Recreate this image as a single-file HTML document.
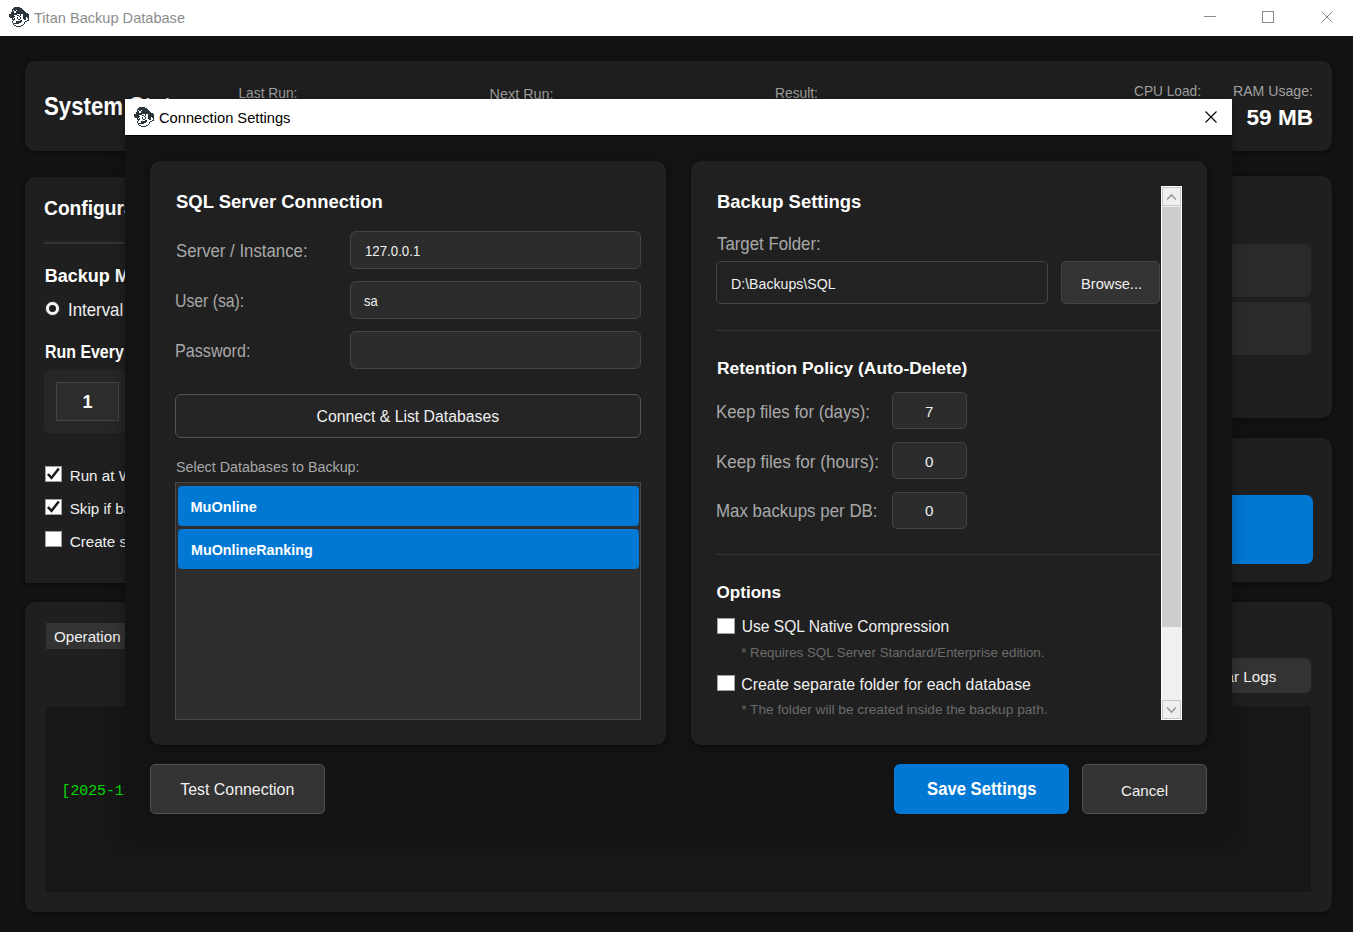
<!DOCTYPE html>
<html><head><meta charset="utf-8"><title>Titan Backup Database</title>
<style>
html,body{margin:0;padding:0;width:1353px;height:932px;overflow:hidden;background:#121212;}
body{position:relative;font-family:"Liberation Sans", sans-serif;}
.t{position:absolute;white-space:nowrap;}
.r{position:absolute;}
</style></head><body>
<div class="r" style="left:0px;top:0px;width:1353px;height:36px;background:#ffffff;border-radius:0px;"></div>
<svg class="r" style="left:7px;top:5px" width="24" height="24" viewBox="0 0 24 24"><path d="M7 2h6v1h-6zM6 3h9v1h-9zM5 4h11v1h-11zM5 5h1v1h-1zM7 5h2v1h-2zM10 5h7v1h-7zM5 6h2v1h-2zM9 6h9v1h-9zM4 7h3v1h-3zM9 7h10v1h-10zM4 8h17v1h-17zM2 9h8v1h-8zM13 9h1v1h-1zM16 9h6v1h-6zM2 10h5v1h-5zM10 10h2v1h-2zM13 10h1v1h-1zM16 10h6v1h-6zM2 11h6v1h-6zM12 11h1v1h-1zM16 11h6v1h-6zM3 12h4v1h-4zM10 12h1v1h-1zM13 12h1v1h-1zM16 12h3v1h-3zM20 12h2v1h-2zM5 13h1v1h-1zM7 13h1v1h-1zM10 13h1v1h-1zM13 13h1v1h-1zM16 13h3v1h-3zM21 13h1v1h-1zM5 14h3v1h-3zM11 14h2v1h-2zM17 14h2v1h-2zM21 14h1v1h-1zM6 15h1v1h-1zM13 15h2v1h-2zM20 15h2v1h-2zM5 16h1v1h-1zM9 16h6v1h-6zM18 16h2v1h-2zM5 17h1v1h-1zM9 17h5v1h-5zM17 17h1v1h-1zM6 18h6v1h-6zM17 18h1v1h-1zM6 19h1v1h-1zM16 19h1v1h-1zM7 20h2v1h-2zM14 20h2v1h-2zM9 21h5v1h-5z" fill="#2a343b"/></svg>
<div class="t" style="left:34.4px;top:9.90px;font-size:15.0px;line-height:15.0px;color:#8c8c8c;transform:scaleX(0.972);transform-origin:0 0;">Titan Backup Database</div>
<div class="r" style="left:1204px;top:16px;width:12px;height:1px;background:#8a8a8a;border-radius:0px;"></div>
<div class="r" style="left:1262px;top:11px;width:12px;height:12px;background:none;border:1px solid #8a8a8a;box-sizing:border-box;border-radius:0px;"></div>
<svg class="r" style="left:1321px;top:11px" width="12" height="12" viewBox="0 0 12 12"><path d="M0.5 0.5L11.5 11.5M11.5 0.5L0.5 11.5" stroke="#8a8a8a" stroke-width="1"/></svg>
<div class="r" style="left:0px;top:36px;width:1353px;height:896px;background:#121212;border-radius:0px;"></div>
<div class="r" style="left:25px;top:61px;width:1307px;height:90px;background:#1f1f1f;border-radius:10px;box-shadow:0 1px 5px rgba(0,0,0,0.45);"></div>
<div class="t" style="left:44.4px;top:94.43px;font-size:25px;line-height:25px;color:#ffffff;font-weight:bold;transform:scaleX(0.889);transform-origin:0 0;">System Status</div>
<div class="t" style="left:238.4px;top:87.32px;font-size:13.8px;line-height:13.8px;color:#a0a0a0;">Last Run:</div>
<div class="t" style="left:489.6px;top:86.81px;font-size:14.4px;line-height:14.4px;color:#a0a0a0;">Next Run:</div>
<div class="t" style="left:775.0px;top:87.32px;font-size:13.8px;line-height:13.8px;color:#a0a0a0;">Result:</div>
<div class="t" style="left:1134.3px;top:83.72px;font-size:14.5px;line-height:14.5px;color:#a0a0a0;transform:scaleX(0.945);transform-origin:0 0;">CPU Load:</div>
<div class="t" style="left:1233.3px;top:83.72px;font-size:14.5px;line-height:14.5px;color:#a0a0a0;transform:scaleX(0.973);transform-origin:0 0;">RAM Usage:</div>
<div class="t" style="left:1246.5px;top:106.66px;font-size:22.6px;line-height:22.6px;color:#ffffff;font-weight:bold;">59 MB</div>
<div class="r" style="left:25px;top:177px;width:675px;height:406px;background:#1f1f1f;border-radius:0px;border-radius:10px 10px 0 0;box-shadow:0 1px 5px rgba(0,0,0,0.45);"></div>
<div class="t" style="left:44.1px;top:199.32px;font-size:19.7px;line-height:19.7px;color:#ffffff;font-weight:bold;transform:scaleX(0.976);transform-origin:0 0;">Configuration</div>
<div class="r" style="left:44px;top:242px;width:636px;height:2px;background:#333333;border-radius:0px;"></div>
<div class="t" style="left:44.7px;top:266.56px;font-size:18px;line-height:18px;color:#ffffff;font-weight:bold;">Backup Mode</div>
<div class="r" style="left:45.7px;top:301.6px;width:13.6px;height:13.6px;border-radius:50%;background:#1f1f1f;box-sizing:border-box;border:3.5px solid #f4f4f4;box-shadow:0 0 1.5px #999"></div>
<div class="t" style="left:67.8px;top:301.25px;font-size:18.6px;line-height:18.6px;color:#f0f0f0;transform:scaleX(0.905);transform-origin:0 0;">Interval</div>
<div class="t" style="left:44.7px;top:343.64px;font-size:17.9px;line-height:17.9px;color:#ffffff;font-weight:bold;transform:scaleX(0.89);transform-origin:0 0;">Run Every:</div>
<div class="r" style="left:44px;top:370px;width:356px;height:63px;background:#262626;border-radius:6px;"></div>
<div class="r" style="left:56px;top:382px;width:63px;height:39px;background:#2d2d2d;border:1px solid #444444;box-sizing:border-box;border-radius:0px;"></div>
<div class="t" style="left:82.5px;top:393.46px;font-size:18px;line-height:18px;color:#ffffff;font-weight:bold;">1</div>
<div class="r" style="left:45px;top:466px;width:17px;height:16px;background:#ffffff;border:1px solid #a0a0a0;box-sizing:border-box;border-radius:0px;"></div>
<svg class="r" style="left:45px;top:466px" width="17" height="16" viewBox="0 0 17 16"><path d="M2.9 8.0L6.5 11.9L13.8 2.6" fill="none" stroke="#1a1a1a" stroke-width="2.5"/></svg>
<div class="r" style="left:45px;top:499px;width:17px;height:16px;background:#ffffff;border:1px solid #a0a0a0;box-sizing:border-box;border-radius:0px;"></div>
<svg class="r" style="left:45px;top:499px" width="17" height="16" viewBox="0 0 17 16"><path d="M2.9 8.0L6.5 11.9L13.8 2.6" fill="none" stroke="#1a1a1a" stroke-width="2.5"/></svg>
<div class="r" style="left:45px;top:531px;width:17px;height:16px;background:#ffffff;border:1px solid #a0a0a0;box-sizing:border-box;border-radius:0px;"></div>
<div class="t" style="left:69.7px;top:468.03px;font-size:15.2px;line-height:15.2px;color:#f0f0f0;">Run at Windows Startup</div>
<div class="t" style="left:69.7px;top:500.83px;font-size:15.2px;line-height:15.2px;color:#f0f0f0;">Skip if backup exists</div>
<div class="t" style="left:69.7px;top:533.53px;font-size:15.2px;line-height:15.2px;color:#f0f0f0;">Create subfolder</div>
<div class="r" style="left:720px;top:176px;width:612px;height:242px;background:#1f1f1f;border-radius:10px;box-shadow:0 1px 5px rgba(0,0,0,0.45);"></div>
<div class="r" style="left:740px;top:244px;width:571px;height:53px;background:#2a2a2a;border-radius:6px;"></div>
<div class="r" style="left:740px;top:302px;width:571px;height:53px;background:#2a2a2a;border-radius:6px;"></div>
<div class="r" style="left:720px;top:438px;width:612px;height:144px;background:#1f1f1f;border-radius:10px;box-shadow:0 1px 5px rgba(0,0,0,0.45);"></div>
<div class="r" style="left:740px;top:495px;width:573px;height:69px;background:#0078d4;border-radius:7px;"></div>
<div class="r" style="left:25px;top:602px;width:1307px;height:310px;background:#1f1f1f;border-radius:10px;box-shadow:0 1px 5px rgba(0,0,0,0.45);"></div>
<div class="r" style="left:46px;top:623px;width:254px;height:26px;background:#333333;border-radius:0px;"></div>
<div class="t" style="left:53.9px;top:628.73px;font-size:15.2px;line-height:15.2px;color:#f0f0f0;">Operation Logs</div>
<div class="r" style="left:1150px;top:658px;width:161px;height:35px;background:#333333;border-radius:6px;"></div>
<div class="t" style="left:1202.8px;top:668.83px;font-size:15.2px;line-height:15.2px;color:#f0f0f0;">Clear Logs</div>
<div class="r" style="left:46px;top:706px;width:1265px;height:186px;background:#171717;border-radius:0px;"></div>
<div class="t" style="left:61.6px;top:783.77px;font-size:14.8px;line-height:14.8px;color:#00dc00;font-family:'Liberation Mono', monospace;">[2025-12-01 10:00:00] Service started</div>
<div class="r" style="left:125px;top:99px;width:1107px;height:739px;background:#131313;box-shadow:0 2px 14px rgba(0,0,0,0.3)"></div>
<div class="r" style="left:125px;top:99px;width:1107px;height:36px;background:#ffffff;border-radius:0px;"></div>
<div class="r" style="left:125px;top:135px;width:1107px;height:1px;background:#000000;border-radius:0px;"></div>
<svg class="r" style="left:132px;top:105px" width="24" height="24" viewBox="0 0 24 24"><path d="M7 2h6v1h-6zM6 3h9v1h-9zM5 4h11v1h-11zM5 5h1v1h-1zM7 5h2v1h-2zM10 5h7v1h-7zM5 6h2v1h-2zM9 6h9v1h-9zM4 7h3v1h-3zM9 7h10v1h-10zM4 8h17v1h-17zM2 9h8v1h-8zM13 9h1v1h-1zM16 9h6v1h-6zM2 10h5v1h-5zM10 10h2v1h-2zM13 10h1v1h-1zM16 10h6v1h-6zM2 11h6v1h-6zM12 11h1v1h-1zM16 11h6v1h-6zM3 12h4v1h-4zM10 12h1v1h-1zM13 12h1v1h-1zM16 12h3v1h-3zM20 12h2v1h-2zM5 13h1v1h-1zM7 13h1v1h-1zM10 13h1v1h-1zM13 13h1v1h-1zM16 13h3v1h-3zM21 13h1v1h-1zM5 14h3v1h-3zM11 14h2v1h-2zM17 14h2v1h-2zM21 14h1v1h-1zM6 15h1v1h-1zM13 15h2v1h-2zM20 15h2v1h-2zM5 16h1v1h-1zM9 16h6v1h-6zM18 16h2v1h-2zM5 17h1v1h-1zM9 17h5v1h-5zM17 17h1v1h-1zM6 18h6v1h-6zM17 18h1v1h-1zM6 19h1v1h-1zM16 19h1v1h-1zM7 20h2v1h-2zM14 20h2v1h-2zM9 21h5v1h-5z" fill="#2a343b"/></svg>
<div class="t" style="left:159.4px;top:110.30px;font-size:15.0px;line-height:15.0px;color:#000000;transform:scaleX(0.979);transform-origin:0 0;">Connection Settings</div>
<svg class="r" style="left:1205px;top:111px" width="12" height="12" viewBox="0 0 12 12"><path d="M0.5 0.5L11.5 11.5M11.5 0.5L0.5 11.5" stroke="#000" stroke-width="1.1"/></svg>
<div class="r" style="left:150px;top:161px;width:516px;height:584px;background:#202020;border-radius:10px;box-shadow:0 1px 5px rgba(0,0,0,0.45);"></div>
<div class="t" style="left:175.5px;top:192.11px;font-size:19.0px;line-height:19.0px;color:#ffffff;font-weight:bold;transform:scaleX(0.971);transform-origin:0 0;">SQL Server Connection</div>
<div class="t" style="left:175.5px;top:241.52px;font-size:18.4px;line-height:18.4px;color:#a8a8a8;transform:scaleX(0.913);transform-origin:0 0;">Server / Instance:</div>
<div class="t" style="left:174.5px;top:291.52px;font-size:18.4px;line-height:18.4px;color:#a8a8a8;transform:scaleX(0.858);transform-origin:0 0;">User (sa):</div>
<div class="t" style="left:174.5px;top:341.52px;font-size:18.4px;line-height:18.4px;color:#a8a8a8;transform:scaleX(0.878);transform-origin:0 0;">Password:</div>
<div class="r" style="left:350px;top:231px;width:291px;height:38px;background:#2c2c2c;border:1px solid #444444;box-sizing:border-box;border-radius:6px;"></div>
<div class="r" style="left:350px;top:281px;width:291px;height:38px;background:#2c2c2c;border:1px solid #444444;box-sizing:border-box;border-radius:6px;"></div>
<div class="r" style="left:350px;top:331px;width:291px;height:38px;background:#2c2c2c;border:1px solid #444444;box-sizing:border-box;border-radius:6px;"></div>
<div class="t" style="left:364.8px;top:243.30px;font-size:15.0px;line-height:15.0px;color:#f0f0f0;transform:scaleX(0.884);transform-origin:0 0;">127.0.0.1</div>
<div class="t" style="left:363.9px;top:293.30px;font-size:15.0px;line-height:15.0px;color:#f0f0f0;transform:scaleX(0.865);transform-origin:0 0;">sa</div>
<div class="r" style="left:175px;top:394px;width:466px;height:44px;background:#252525;border:1px solid #535353;box-sizing:border-box;border-radius:6px;"></div>
<div class="t" style="left:316.5px;top:409.32px;font-size:15.8px;line-height:15.8px;color:#f0f0f0;">Connect &amp; List Databases</div>
<div class="t" style="left:175.6px;top:458.91px;font-size:15.1px;line-height:15.1px;color:#a8a8a8;transform:scaleX(0.947);transform-origin:0 0;">Select Databases to Backup:</div>
<div class="r" style="left:175px;top:482px;width:466px;height:238px;background:#2d2d2d;border:1px solid #484848;box-sizing:border-box;border-radius:0px;"></div>
<div class="r" style="left:178px;top:486px;width:461px;height:40px;background:#0078d4;border-radius:4px;"></div>
<div class="r" style="left:178px;top:529px;width:461px;height:40px;background:#0078d4;border-radius:4px;"></div>
<div class="t" style="left:190.5px;top:499.53px;font-size:14.55px;line-height:14.55px;color:#ffffff;font-weight:bold;">MuOnline</div>
<div class="t" style="left:190.5px;top:542.58px;font-size:14.55px;line-height:14.55px;color:#ffffff;font-weight:bold;transform:scaleX(0.984);transform-origin:0 0;">MuOnlineRanking</div>
<div class="r" style="left:691px;top:161px;width:516px;height:584px;background:#202020;border-radius:10px;box-shadow:0 1px 5px rgba(0,0,0,0.45);"></div>
<div class="t" style="left:716.9px;top:191.81px;font-size:19.0px;line-height:19.0px;color:#ffffff;font-weight:bold;transform:scaleX(0.969);transform-origin:0 0;">Backup Settings</div>
<div class="t" style="left:716.9px;top:235.02px;font-size:18.4px;line-height:18.4px;color:#a8a8a8;transform:scaleX(0.914);transform-origin:0 0;">Target Folder:</div>
<div class="r" style="left:716px;top:261px;width:332px;height:43px;background:#222222;border:1px solid #444444;box-sizing:border-box;border-radius:5px;"></div>
<div class="t" style="left:730.8px;top:276.00px;font-size:15.0px;line-height:15.0px;color:#f0f0f0;transform:scaleX(0.943);transform-origin:0 0;">D:\Backups\SQL</div>
<div class="r" style="left:1061px;top:261px;width:99px;height:43px;background:#333333;border:1px solid #444444;box-sizing:border-box;border-radius:5px;"></div>
<div class="t" style="left:1080.6px;top:276.30px;font-size:15.0px;line-height:15.0px;color:#f0f0f0;transform:scaleX(0.977);transform-origin:0 0;">Browse...</div>
<div class="r" style="left:716px;top:330px;width:445px;height:1px;background:#333333;border-radius:0px;"></div>
<div class="t" style="left:717.0px;top:360.27px;font-size:17.4px;line-height:17.4px;color:#ffffff;font-weight:bold;">Retention Policy (Auto-Delete)</div>
<div class="t" style="left:715.9px;top:402.62px;font-size:18.4px;line-height:18.4px;color:#a8a8a8;transform:scaleX(0.913);transform-origin:0 0;">Keep files for (days):</div>
<div class="t" style="left:715.9px;top:452.52px;font-size:18.4px;line-height:18.4px;color:#a8a8a8;transform:scaleX(0.927);transform-origin:0 0;">Keep files for (hours):</div>
<div class="t" style="left:715.9px;top:502.42px;font-size:18.4px;line-height:18.4px;color:#a8a8a8;transform:scaleX(0.919);transform-origin:0 0;">Max backups per DB:</div>
<div class="r" style="left:892px;top:392px;width:75px;height:37px;background:#2c2c2c;border:1px solid #444444;box-sizing:border-box;border-radius:5px;"></div>
<div class="r" style="left:892px;top:442px;width:75px;height:37px;background:#2c2c2c;border:1px solid #444444;box-sizing:border-box;border-radius:5px;"></div>
<div class="r" style="left:892px;top:492px;width:75px;height:37px;background:#2c2c2c;border:1px solid #444444;box-sizing:border-box;border-radius:5px;"></div>
<div class="t" style="left:925.0px;top:404.23px;font-size:15.2px;line-height:15.2px;color:#f0f0f0;">7</div>
<div class="t" style="left:925.0px;top:454.43px;font-size:15.2px;line-height:15.2px;color:#f0f0f0;">0</div>
<div class="t" style="left:925.0px;top:503.33px;font-size:15.2px;line-height:15.2px;color:#f0f0f0;">0</div>
<div class="r" style="left:716px;top:554px;width:445px;height:1px;background:#333333;border-radius:0px;"></div>
<div class="t" style="left:716.5px;top:584.02px;font-size:17.1px;line-height:17.1px;color:#ffffff;font-weight:bold;">Options</div>
<div class="r" style="left:717px;top:618px;width:18px;height:16px;background:#ffffff;border:1px solid #a0a0a0;box-sizing:border-box;border-radius:0px;"></div>
<div class="r" style="left:717px;top:675px;width:18px;height:16px;background:#ffffff;border:1px solid #a0a0a0;box-sizing:border-box;border-radius:0px;"></div>
<div class="t" style="left:741.7px;top:618.79px;font-size:15.6px;line-height:15.6px;color:#f0f0f0;">Use SQL Native Compression</div>
<div class="t" style="left:741.2px;top:645.74px;font-size:13.3px;line-height:13.3px;color:#6b6b6b;">* Requires SQL Server Standard/Enterprise edition.</div>
<div class="t" style="left:741.2px;top:677.34px;font-size:15.9px;line-height:15.9px;color:#f0f0f0;">Create separate folder for each database</div>
<div class="t" style="left:741.2px;top:702.70px;font-size:13.7px;line-height:13.7px;color:#6b6b6b;">* The folder will be created inside the backup path.</div>
<div class="r" style="left:1161px;top:186px;width:21px;height:534px;background:#f0f0f0;border:1px solid #ffffff;box-sizing:border-box;border-radius:0px;"></div>
<div class="r" style="left:1162px;top:187px;width:19px;height:19px;background:#f0f0f0;border:1px solid #c6c6c6;box-sizing:border-box;border-radius:0px;"></div>
<div class="r" style="left:1162px;top:207px;width:19px;height:420px;background:#cdcdcd;border-radius:0px;"></div>
<div class="r" style="left:1162px;top:700px;width:19px;height:19px;background:#f0f0f0;border:1px solid #c6c6c6;box-sizing:border-box;border-radius:0px;"></div>
<svg class="r" style="left:1166px;top:193px" width="11" height="8" viewBox="0 0 11 8"><path d="M1 6.5L5.5 2L10 6.5" fill="none" stroke="#999" stroke-width="1.6"/></svg>
<svg class="r" style="left:1166px;top:706px" width="11" height="8" viewBox="0 0 11 8"><path d="M1 1.5L5.5 6L10 1.5" fill="none" stroke="#999" stroke-width="1.6"/></svg>
<div class="r" style="left:150px;top:764px;width:175px;height:50px;background:#333333;border:1px solid #505050;box-sizing:border-box;border-radius:5px;"></div>
<div class="t" style="left:180.3px;top:782.44px;font-size:15.9px;line-height:15.9px;color:#f0f0f0;">Test Connection</div>
<div class="r" style="left:894px;top:764px;width:175px;height:50px;background:#0078d4;border-radius:6px;"></div>
<div class="t" style="left:927.3px;top:780.31px;font-size:18.3px;line-height:18.3px;color:#ffffff;font-weight:bold;transform:scaleX(0.913);transform-origin:0 0;">Save Settings</div>
<div class="r" style="left:1082px;top:764px;width:125px;height:50px;background:#333333;border:1px solid #505050;box-sizing:border-box;border-radius:5px;"></div>
<div class="t" style="left:1121.0px;top:782.98px;font-size:15.5px;line-height:15.5px;color:#f0f0f0;transform:scaleX(0.975);transform-origin:0 0;">Cancel</div>
</body></html>
